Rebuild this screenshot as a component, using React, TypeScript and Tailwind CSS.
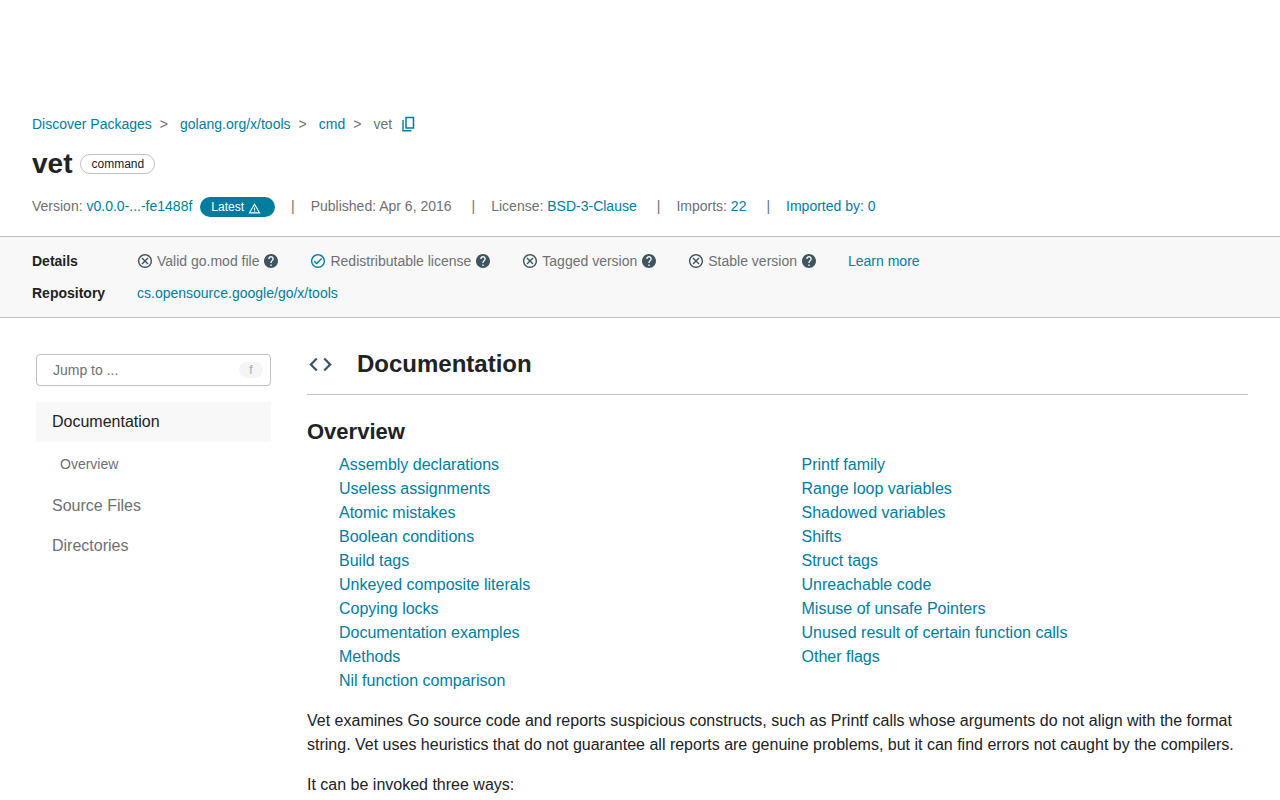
import type { ReactNode } from "react";
import {
  MdCode,
  MdHelp,
  MdOutlineCancel,
  MdOutlineCheckCircle,
  MdWarningAmber,
} from "react-icons/md";

const topics = [
  "Assembly declarations",
  "Useless assignments",
  "Atomic mistakes",
  "Boolean conditions",
  "Build tags",
  "Unkeyed composite literals",
  "Copying locks",
  "Documentation examples",
  "Methods",
  "Nil function comparison",
  "Printf family",
  "Range loop variables",
  "Shadowed variables",
  "Shifts",
  "Struct tags",
  "Unreachable code",
  "Misuse of unsafe Pointers",
  "Unused result of certain function calls",
  "Other flags",
];

const checks = [
  { label: "Valid go.mod file", ok: false },
  { label: "Redistributable license", ok: true },
  { label: "Tagged version", ok: false },
  { label: "Stable version", ok: false },
];

// Trims the Material icons' built-in margin so the circles fill more of the box.
const circleViewBox = "0.6 0.6 22.8 22.8";

function CopyIcon() {
  return (
    <svg viewBox="0 0 16 16" className="size-4" fill="none" stroke="currentColor" aria-hidden="true">
      <path d="M6 1.5h7.5v10.5H6z" strokeWidth="1.5" />
      <path d="M3 4v10.7h8.5" strokeWidth="1.4" />
    </svg>
  );
}

function Link({ children }: { children: ReactNode }) {
  return (
    <a href="#" className="text-[#007d9c] hover:underline">
      {children}
    </a>
  );
}

function Divider() {
  return <span className="mr-4 ml-5">|</span>;
}

function Breadcrumbs() {
  return (
    <nav aria-label="Breadcrumb" className="flex h-6 items-center">
      <ol className="flex items-center">
        {["Discover Packages", "golang.org/x/tools", "cmd"].map((crumb) => (
          <li key={crumb} className="flex">
            <Link>{crumb}</Link>
            <span className="mr-3 ml-2">&gt;</span>
          </li>
        ))}
        <li>vet</li>
      </ol>
      <button type="button" aria-label="Copy path" className="ml-2 text-[#007d9c]">
        <CopyIcon />
      </button>
    </nav>
  );
}

function Header() {
  return (
    <header className="px-8 pt-28 pb-[18px]">
      <Breadcrumbs />
      <div className="mt-2 flex h-10 items-center gap-2">
        <h1 className="text-[28px] leading-10 font-bold text-[#202224]">vet</h1>
        <span className="flex h-5 items-center rounded-full border border-[#bfbfbf] px-2.5 text-xs text-[#202224]">
          command
        </span>
      </div>
      <div className="mt-2.5 flex h-6 items-center whitespace-nowrap">
        <span>
          Version: <Link>v0.0.0-...-fe1488f</Link>
        </span>
        <span className="mt-0.5 ml-2 flex h-5 items-center gap-1 rounded-full bg-[#007d9c] pr-3.5 pl-[11px] text-xs text-white">
          Latest
          <MdWarningAmber className="mt-0.5 size-[13px]" />
        </span>
        <span className="mx-4">|</span>
        <span>Published: Apr 6, 2016</span>
        <Divider />
        <span>
          License: <Link>BSD-3-Clause</Link>
        </span>
        <Divider />
        <span>
          Imports: <Link>22</Link>
        </span>
        <Divider />
        <Link>Imported by: 0</Link>
      </div>
    </header>
  );
}

function Details() {
  return (
    <section className="grid grid-cols-[105px_1fr] gap-y-2 border-y border-[#bfbfbf] bg-[#f8f8f8] px-8 py-3 leading-6">
      <h2 className="font-bold text-[#202224]">Details</h2>
      <ul className="flex flex-wrap items-center gap-x-[31px]">
        {checks.map(({ label, ok }) => (
          <li key={label} className="flex items-center gap-1">
            {ok ? (
              <MdOutlineCheckCircle viewBox={circleViewBox} className="size-4 text-[#007d9c]" />
            ) : (
              <MdOutlineCancel viewBox={circleViewBox} className="size-4 text-[#3e5461]" />
            )}
            {label}
            <button type="button" aria-label={`About ${label}`} className="text-[#3e5461]">
              <MdHelp viewBox={circleViewBox} className="size-4" />
            </button>
          </li>
        ))}
        <li>
          <Link>Learn more</Link>
        </li>
      </ul>
      <h2 className="font-bold text-[#202224]">Repository</h2>
      <div>
        <Link>cs.opensource.google/go/x/tools</Link>
      </div>
    </section>
  );
}

function Sidebar() {
  return (
    <aside className="w-[235px] shrink-0">
      <label className="flex h-8 items-center rounded border border-[#bfbfbf] pr-[7px] pl-4">
        <input
          type="text"
          aria-label="Jump to"
          placeholder="Jump to ..."
          className="min-w-0 flex-1 bg-transparent outline-none placeholder:text-[#6e7072]"
        />
        <kbd className="flex h-4 w-6 items-center justify-center rounded-full bg-[#f5f5f5] font-[Liberation_Sans,Arial,sans-serif] text-xs text-[#a8a8a8]">
          f
        </kbd>
      </label>
      <nav aria-label="Sections" className="mt-4 text-base">
        <a href="#documentation" className="flex h-10 items-center bg-[#f8f8f8] px-4 text-[#202224]">
          Documentation
        </a>
        <a href="#overview" className="flex h-11 items-center px-6 text-sm">
          Overview
        </a>
        <a href="#source" className="flex h-10 items-center px-4">
          Source Files
        </a>
        <a href="#directories" className="flex h-10 items-center px-4">
          Directories
        </a>
      </nav>
    </aside>
  );
}

function Documentation() {
  return (
    <main className="min-w-0 flex-1 text-base text-[#202224]">
      <h2
        id="documentation"
        className="-mt-2 flex items-center gap-[23px] border-b border-[#bfbfbf] pb-3 text-2xl leading-9 font-bold"
      >
        <MdCode className="size-[27px] text-[#3e5461]" />
        Documentation
      </h2>
      <h3 id="overview" className="mt-[22px] text-[22px] leading-[30px] font-bold">
        Overview
      </h3>
      <ul className="mt-1.5 columns-2 gap-4 pl-8">
        {topics.map((topic) => (
          <li key={topic} className="leading-6">
            <Link>{topic}</Link>
          </li>
        ))}
      </ul>
      <p className="mt-4">
        Vet examines Go source code and reports suspicious constructs, such as Printf calls whose
        arguments do not align with the format string. Vet uses heuristics that do not guarantee all
        reports are genuine problems, but it can find errors not caught by the compilers.
      </p>
      <p className="mt-4">It can be invoked three ways:</p>
    </main>
  );
}

export default function App() {
  return (
    <div className="min-h-screen bg-white font-[Liberation_Sans,Arial,sans-serif] text-sm text-[#6e7072]">
      <Header />
      <Details />
      <div className="flex gap-9 pt-9 pr-8 pl-9">
        <Sidebar />
        <Documentation />
      </div>
    </div>
  );
}
